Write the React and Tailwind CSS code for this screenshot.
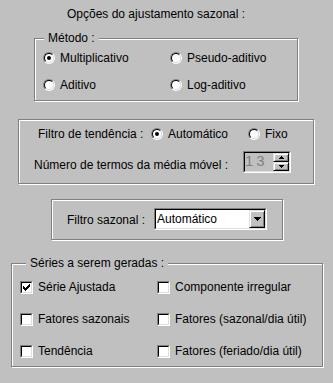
import React from "react";

const etched =
  "relative border border-[#808080] shadow-[inset_1px_1px_0_#fff,1px_1px_0_#fff]";

function Radio({ checked, label }) {
  return (
    <div className="flex items-center gap-[5px] h-[14px]">
      <span className="shrink-0 w-[12px] h-[12px] rounded-full border border-t-[#808080] border-l-[#808080] border-b-white border-r-white flex">
        <span className="flex-1 rounded-full border border-t-black border-l-black border-b-[#dfdfdf] border-r-[#dfdfdf] bg-white flex items-center justify-center">
          {checked && <span className="w-[4px] h-[4px] rounded-full bg-black" />}
        </span>
      </span>
      <span className="whitespace-nowrap">{label}</span>
    </div>
  );
}

function Check({ checked, label }) {
  return (
    <div className="flex items-center gap-[5px] h-[14px]">
      <span className="shrink-0 w-[13px] h-[13px] border border-t-[#808080] border-l-[#808080] border-b-white border-r-white flex">
        <span className="flex-1 border border-t-black border-l-black border-b-[#dfdfdf] border-r-[#dfdfdf] bg-white flex">
          {checked && (
            <svg width="9" height="9" viewBox="0 0 9 9" shapeRendering="crispEdges">
              <g fill="#000">
                <rect x="7" y="1" width="1" height="1" />
                <rect x="6" y="2" width="2" height="1" />
                <rect x="1" y="3" width="1" height="1" />
                <rect x="5" y="3" width="3" height="1" />
                <rect x="1" y="4" width="2" height="1" />
                <rect x="4" y="4" width="3" height="1" />
                <rect x="1" y="5" width="5" height="1" />
                <rect x="2" y="6" width="3" height="1" />
                <rect x="3" y="7" width="1" height="1" />
              </g>
            </svg>
          )}
        </span>
      </span>
      <span className="whitespace-nowrap">{label}</span>
    </div>
  );
}

function RaisedBtn({ children, className }) {
  return (
    <div
      className={
        "flex items-center justify-center bg-[#c0c0c0] border border-t-[#dfdfdf] border-l-[#dfdfdf] border-r-black border-b-black shadow-[inset_1px_1px_0_#fff,inset_-1px_-1px_0_#808080] " +
        className
      }
    >
      {children}
    </div>
  );
}

export default function App() {
  return (
    <div className="w-[333px] h-[383px] bg-[#c0c0c0] flex flex-col text-black text-[12px] leading-[14px] font-['Liberation_Sans',Arial,sans-serif] overflow-hidden">
      {/* Title */}
      <div className="mt-[7px] ml-[67px] h-[14px] whitespace-nowrap">
        Opções do ajustamento sazonal :
      </div>

      {/* Método */}
      <div className={etched + " mt-[17px] ml-[34px] w-[264px] h-[63px] pt-[12px] pl-[8px]"}>
        <div className="absolute left-[9px] top-[-8px] px-[4px] bg-[#c0c0c0] whitespace-nowrap">
          Método :
        </div>
        <div className="grid grid-cols-[127px_1fr] gap-y-[13px]">
          <Radio checked label="Multiplicativo" />
          <Radio label="Pseudo-aditivo" />
          <Radio label="Aditivo" />
          <Radio label="Log-aditivo" />
        </div>
      </div>

      {/* Filtro de tendência */}
      <div className={etched + " mt-[18px] ml-[18px] w-[296px] h-[65px] pt-[7px] pl-[15px] flex flex-col"}>
        <div className="flex items-center h-[14px]">
          <span className="w-[117px] pl-[4px] whitespace-nowrap">Filtro de tendência :</span>
          <Radio checked label="Automático" />
          <div className="ml-[20px]">
            <Radio label="Fixo" />
          </div>
        </div>
        <div className="flex items-start mt-[10px]">
          <span className="w-[209px] mt-[7px] whitespace-nowrap">
            Número de termos da média móvel :
          </span>
          <div className="w-[48px] h-[22px] border border-t-[#808080] border-l-[#808080] border-b-white border-r-white flex">
            <div className="flex-1 flex border border-t-black border-l-black border-b-[#dfdfdf] border-r-[#dfdfdf] bg-[#c0c0c0]">
              <span className="flex-1 text-[15px] leading-[15px] tracking-[3px] text-[#808080]">
                13
              </span>
              <div className="w-[16px] flex flex-col">
                <RaisedBtn className="flex-1">
                  <svg width="5" height="3" viewBox="0 0 5 3" shapeRendering="crispEdges">
                    <g fill="#000">
                      <rect x="2" y="0" width="1" height="1" />
                      <rect x="1" y="1" width="3" height="1" />
                      <rect x="0" y="2" width="5" height="1" />
                    </g>
                  </svg>
                </RaisedBtn>
                <RaisedBtn className="flex-1">
                  <svg width="5" height="3" viewBox="0 0 5 3" shapeRendering="crispEdges">
                    <g fill="#000">
                      <rect x="0" y="0" width="5" height="1" />
                      <rect x="1" y="1" width="3" height="1" />
                      <rect x="2" y="2" width="1" height="1" />
                    </g>
                  </svg>
                </RaisedBtn>
              </div>
            </div>
          </div>
        </div>
      </div>

      {/* Filtro sazonal */}
      <div className={etched + " mt-[15px] ml-[51px] w-[232px] h-[41px] pt-[8px] pl-[15px]"}>
        <div className="flex items-center">
          <span className="w-[87px] pt-[2px] whitespace-nowrap">Filtro sazonal :</span>
          <div className="w-[113px] h-[22px] border border-t-[#808080] border-l-[#808080] border-b-white border-r-white flex">
            <div className="flex-1 flex border border-t-black border-l-black border-b-[#dfdfdf] border-r-[#dfdfdf] bg-white">
              <span className="flex-1 flex items-center pl-[1px]">Automático</span>
              <RaisedBtn className="w-[16px]">
                <svg width="7" height="4" viewBox="0 0 7 4" shapeRendering="crispEdges">
                  <g fill="#000">
                    <rect x="0" y="0" width="7" height="1" />
                    <rect x="1" y="1" width="5" height="1" />
                    <rect x="2" y="2" width="3" height="1" />
                    <rect x="3" y="3" width="1" height="1" />
                  </g>
                </svg>
              </RaisedBtn>
            </div>
          </div>
        </div>
      </div>

      {/* Séries */}
      <div className={etched + " mt-[23px] ml-[11px] w-[312px] h-[104px] pt-[16px] pl-[8px]"}>
        <div className="absolute left-[14px] top-[-8px] px-[4px] bg-[#c0c0c0] whitespace-nowrap">
          Séries a serem geradas :
        </div>
        <div className="grid grid-cols-[137px_1fr] gap-y-[18px]">
          <Check checked label="Série Ajustada" />
          <Check label="Componente irregular" />
          <Check label="Fatores sazonais" />
          <Check label="Fatores (sazonal/dia útil)" />
          <Check label="Tendência" />
          <Check label="Fatores (feriado/dia útil)" />
        </div>
      </div>
    </div>
  );
}
